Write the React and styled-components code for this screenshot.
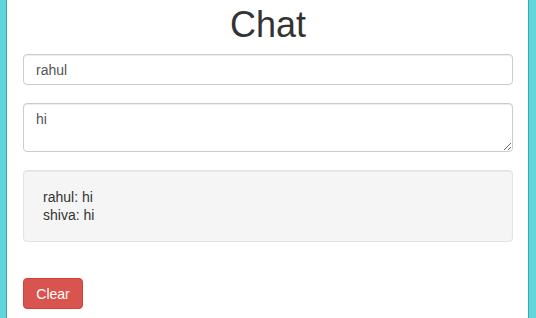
import React from 'react'
import styled, { createGlobalStyle } from 'styled-components'

const GlobalStyle = createGlobalStyle`
  html, body {
    margin: 0;
    padding: 0;
    background: #ffffff;
  }
  * {
    box-sizing: border-box;
  }
`

const Frame = styled.div`
  min-height: 100vh;
  background-color: #60d5dc;
  padding: 0 7px 0 6px;
  display: flex;
`

const Page = styled.div`
  flex: 1;
  background-color: #ffffff;
  border-left: 1px solid #3fa6ac;
  border-right: 1px solid #3fa6ac;
  padding: 5px 15px 0 16px;
  display: flex;
  flex-direction: column;
  font-family: "Liberation Sans", Arial, sans-serif;
  font-size: 14px;
  color: #333;
`

const Title = styled.h1`
  margin: 0 0 9px;
  font-size: 36px;
  line-height: 40px;
  font-weight: 400;
  text-align: center;
  color: #333;
`

const Field = styled.input`
  display: block;
  width: 100%;
  height: 31px;
  padding: 5px 12px;
  border: 1px solid #ccc;
  border-radius: 4px;
  font-family: inherit;
  font-size: 14px;
  color: #555;
  box-shadow: inset 0 1px 1px rgba(0, 0, 0, 0.075);
  margin-bottom: 18px;
  outline: none;
`

const Message = styled.textarea`
  display: block;
  width: 100%;
  height: 49px;
  padding: 5px 12px;
  border: 1px solid #ccc;
  border-radius: 4px;
  font-family: inherit;
  font-size: 14px;
  line-height: 20px;
  color: #555;
  box-shadow: inset 0 1px 1px rgba(0, 0, 0, 0.075);
  margin-bottom: 18px;
  resize: vertical;
  outline: none;
`

const Log = styled.div`
  background-color: #f5f5f5;
  border: 1px solid #e3e3e3;
  border-radius: 4px;
  padding: 17px 19px;
  min-height: 71px;
  line-height: 18px;
  color: #333;
  box-shadow: inset 0 1px 1px rgba(0, 0, 0, 0.05);
  margin-bottom: 36px;
`

const Line = styled.div``

const ClearButton = styled.button`
  align-self: flex-start;
  width: 60px;
  height: 31px;
  padding: 0;
  border: 1px solid #d43f3a;
  border-radius: 4px;
  background-color: #d9534f;
  color: #fff;
  font-family: inherit;
  font-size: 14px;
  cursor: pointer;
`

const messages = [
  { name: 'rahul', text: 'hi' },
  { name: 'shiva', text: 'hi' },
]

const App = () => {
  return (
    <>
      <GlobalStyle />
      <Frame>
        <Page>
          <Title>Chat</Title>
          <Field defaultValue="rahul" />
          <Message defaultValue="hi" />
          <Log>
            {messages.map((m, i) => (
              <Line key={i}>{m.name}: {m.text}</Line>
            ))}
          </Log>
          <ClearButton>Clear</ClearButton>
        </Page>
      </Frame>
    </>
  )
}

export default App
